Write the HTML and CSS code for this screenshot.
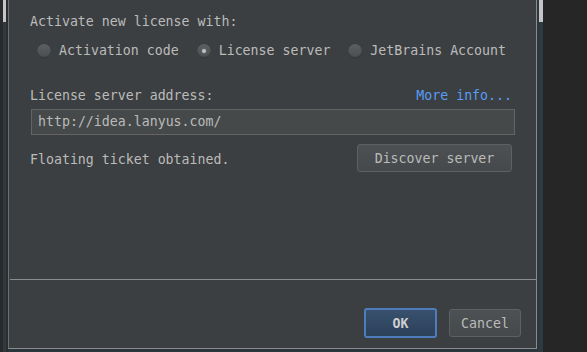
FILE: index.html
```html
<!DOCTYPE html>
<html>
<head>
<meta charset="utf-8">
<link rel="stylesheet" href="styles.css">
</head>
<body>
<div class="screen">
  <div class="edge-left">
    <div class="e-dark"></div>
    <div class="e-scroll"></div>
    <div class="e-gap"></div>
  </div>
  <div class="dialog-col">
    <div class="dialog">
      <div class="content">
        <div class="text">Activate new license with:</div>
        <div class="radios">
          <label class="radio"><span class="dot"></span><span>Activation code</span></label>
          <label class="radio"><span class="dot on"></span><span>License server</span></label>
          <label class="radio"><span class="dot"></span><span>JetBrains Account</span></label>
        </div>
        <div class="addr-row">
          <span class="text">License server address:</span>
          <span class="link">More info...</span>
        </div>
        <div class="field">http://idea.lanyus.com/</div>
        <div class="status-row">
          <span class="text status">Floating ticket obtained.</span>
          <span class="btn discover">Discover server</span>
        </div>
      </div>
      <div class="sep"></div>
      <div class="footer">
        <span class="btn ok">OK</span>
        <span class="btn cancel">Cancel</span>
      </div>
    </div>
    <div class="bottom-strip"></div>
  </div>
  <div class="edge-right">
    <div class="r-gap"></div>
    <div class="e-scroll"></div>
  </div>
  <div class="desk"></div>
</div>
</body>
</html>
```
FILE: styles.css
```css
html, body {
  margin: 0;
  padding: 0;
  background: #262626;
}
.screen {
  display: flex;
  width: 587px;
  height: 352px;
  overflow: hidden;
  font-family: "DejaVu Sans Mono", "Liberation Mono", monospace;
  font-size: 13.25px;
  color: #bbbbbb;
}
.edge-left {
  display: flex;
  width: 8px;
  flex: none;
}
.e-dark {
  width: 3px;
  background: #2a2a2a;
}
.e-scroll {
  width: 3px;
  background: linear-gradient(#c3c5c6 0 22px, #2e3a41 22px);
}
.e-gap {
  width: 2px;
  background: #2b2d2e;
}
.dialog-col {
  display: flex;
  flex-direction: column;
  width: 529px;
  flex: none;
}
.dialog {
  height: 349px;
  box-sizing: border-box;
  background: #3c3f41;
  border-left: 1px solid #6d7072;
  border-right: 1px solid #8a8d8f;
  border-bottom: 1px solid #8a8d8f;
  display: flex;
  flex-direction: column;
}
.bottom-strip {
  flex: 1;
  background: #2b363c;
}
.content {
  flex: 1;
  display: flex;
  flex-direction: column;
  padding: 14px 21px 0 21px;
  max-height: 265px;
}
.text {
  line-height: 16px;
  white-space: pre;
}
.radios {
  display: flex;
  align-items: center;
  margin-top: 13px;
  padding-left: 7px;
  gap: 18px;
  height: 16px;
}
.radio {
  display: flex;
  align-items: center;
  gap: 8px;
  line-height: 16px;
}
.dot {
  flex: none;
  width: 14px;
  height: 14px;
  border-radius: 50%;
  background: linear-gradient(#5b5f61, #4a4e50);
  box-shadow: inset 0 -1px 1px rgba(0, 0, 0, 0.3), 0 0 0 0.5px #37393b;
  display: flex;
  align-items: center;
  justify-content: center;
}
.dot.on::after {
  content: "";
  width: 4px;
  height: 4px;
  border-radius: 50%;
  background: #c0c0c0;
  box-shadow: 0 0 2px #909090;
}
.addr-row {
  display: flex;
  justify-content: space-between;
  align-items: center;
  margin-top: 29px;
}
.link {
  color: #589df6;
  line-height: 16px;
  margin-right: 3px;
}
.field {
  margin-top: 5px;
  margin-left: 1px;
  height: 26px;
  box-sizing: border-box;
  border: 1px solid #646464;
  background: #45494a;
  padding-left: 6px;
  line-height: 24px;
}
.status-row {
  display: flex;
  justify-content: space-between;
  align-items: center;
  margin-top: 9px;
}
.status {
  padding-top: 3px;
}
.btn {
  display: flex;
  align-items: center;
  justify-content: center;
  box-sizing: border-box;
  border: 1px solid #5e6163;
  border-radius: 3px;
  background: linear-gradient(#4d5153, #46494b);
  color: #bbbbbb;
}
.discover {
  width: 155px;
  height: 28px;
  margin-right: 3px;
}
.sep {
  height: 1px;
  margin-left: 1px;
  background: #8c8c8c;
}
.footer {
  display: flex;
  justify-content: flex-end;
  align-items: flex-start;
  gap: 12px;
  padding: 28px 15px 0 0;
  height: 68px;
  box-sizing: border-box;
}
.ok {
  width: 73px;
  height: 30px;
  border: 2px solid #4f7dbb;
  background: linear-gradient(#39516e, #2c4059);
  font-weight: bold;
  color: #cfcfcf;
}
.cancel {
  width: 72px;
  height: 28px;
  margin-top: 1px;
}
.edge-right {
  display: flex;
  width: 6px;
  flex: none;
}
.r-gap {
  width: 2px;
  background: #2c373d;
}
.edge-right .e-scroll {
  width: 4px;
}
.desk {
  flex: 1;
  background: #262626;
}
```
